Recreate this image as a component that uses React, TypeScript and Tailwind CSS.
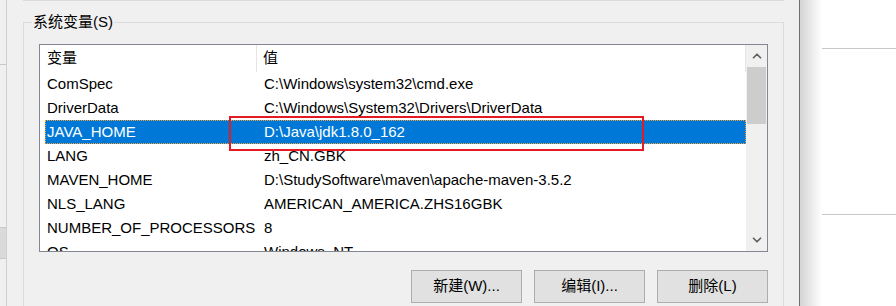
import { ChevronUp, ChevronDown } from 'lucide-react';

const ROWS = [
  { name: 'ComSpec', value: 'C:\\Windows\\system32\\cmd.exe' },
  { name: 'DriverData', value: 'C:\\Windows\\System32\\Drivers\\DriverData' },
  { name: 'JAVA_HOME', value: 'D:\\Java\\jdk1.8.0_162', selected: true },
  { name: 'LANG', value: 'zh_CN.GBK' },
  { name: 'MAVEN_HOME', value: 'D:\\StudySoftware\\maven\\apache-maven-3.5.2' },
  { name: 'NLS_LANG', value: 'AMERICAN_AMERICA.ZHS16GBK' },
  { name: 'NUMBER_OF_PROCESSORS', value: '8' },
  { name: 'OS', value: 'Windows_NT' },
];

const FONT = { fontFamily: '"Liberation Sans", "Noto Sans CJK SC", sans-serif' };

function Button({ label }: { label: string }) {
  return (
    <button className="w-[111px] h-[33px] bg-[#e1e1e1] border border-[#adadad] text-[15px] text-black flex items-center justify-center">
      {label}
    </button>
  );
}

export default function App() {
  return (
    <div className="relative w-[896px] h-[306px] overflow-hidden flex bg-white" style={FONT}>
      {/* left edge of the window behind */}
      <div className="w-[7px] h-full bg-[#f0f0f0] border-r border-[#cfcfcf] flex flex-col">
        <div className="h-[65px] border-b border-[#c8c8c8]" />
        <div className="h-[163px] border-b border-[#c8c8c8]" />
        <div className="h-[31px] bg-[#dadada] border-b border-[#c8c8c8]" />
      </div>

      {/* dialog */}
      <div className="w-[793px] h-full bg-[#f0f0f0] border-r border-[#6e6e6e] pl-[16px]">
        <div className="w-[761px] border-t border-[#dcdcdc] pt-[21px]">
          {/* group box */}
          <div className="relative w-[761px] h-[300px] border-l border-t border-r border-[#dcdcdc] pl-[15px] pt-[21px]">
            <div className="absolute left-[8px] top-[-12px] px-[1px] bg-[#f0f0f0] text-[15px] leading-[22px] text-black">
              系统变量(S)
            </div>

            {/* list view */}
            <div className="w-[729px] h-[208px] border border-[#828790] bg-white flex">
              <div className="w-[706px] flex flex-col overflow-hidden">
                <div className="h-[27px] shrink-0 flex items-center text-[15px] text-black border-r border-[#e5e5e5]">
                  <div className="w-[217px] h-full pl-[7px] flex items-center border-r border-[#e5e5e5]">变量</div>
                  <div className="pl-[6px]">值</div>
                </div>
                {ROWS.map(r => (
                  <div
                    key={r.name}
                    className={`h-[24px] shrink-0 ml-[5px] flex items-center text-[15px] whitespace-nowrap ${
                      r.selected ? 'bg-[#0078d7] text-white outline outline-1 outline-dotted outline-[#f5a23a] -outline-offset-1' : 'text-black'
                    }`}
                  >
                    <div className="w-[212px] pl-[2px]">{r.name}</div>
                    <div className="pl-[7px]">{r.value}</div>
                  </div>
                ))}
              </div>
              {/* scrollbar */}
              <div className="w-[21px] h-full bg-[#f0f0f0] flex flex-col">
                <div className="h-[22px] flex items-center justify-center text-[#606060]">
                  <ChevronUp className="w-[14px] h-[14px]" strokeWidth={3} />
                </div>
                <div className="h-[57px] mx-[1px] bg-[#cdcdcd]" />
                <div className="flex-1" />
                <div className="h-[22px] flex items-center justify-center text-[#606060]">
                  <ChevronDown className="w-[14px] h-[14px]" strokeWidth={3} />
                </div>
              </div>
            </div>

            {/* buttons */}
            <div className="w-[729px] mt-[18px] flex justify-end gap-[12px]">
              <Button label="新建(W)..." />
              <Button label="编辑(I)..." />
              <Button label="删除(L)" />
            </div>
          </div>
        </div>
      </div>

      {/* window behind, right */}
      <div className="flex-1 h-full relative bg-white">
        <div className="absolute inset-y-0 left-0 w-[22px] bg-gradient-to-r from-[#d4d4d4] to-white" />
        <div className="h-[49px] border-b border-[#c8c8c8]" />
        <div className="h-[166px] border-b border-[#c8c8c8]" />
      </div>

      {/* red annotation */}
      <div className="absolute left-[229px] top-[116px] w-[415px] h-[35px] border-2 border-[#e41b23]" />
    </div>
  );
}
